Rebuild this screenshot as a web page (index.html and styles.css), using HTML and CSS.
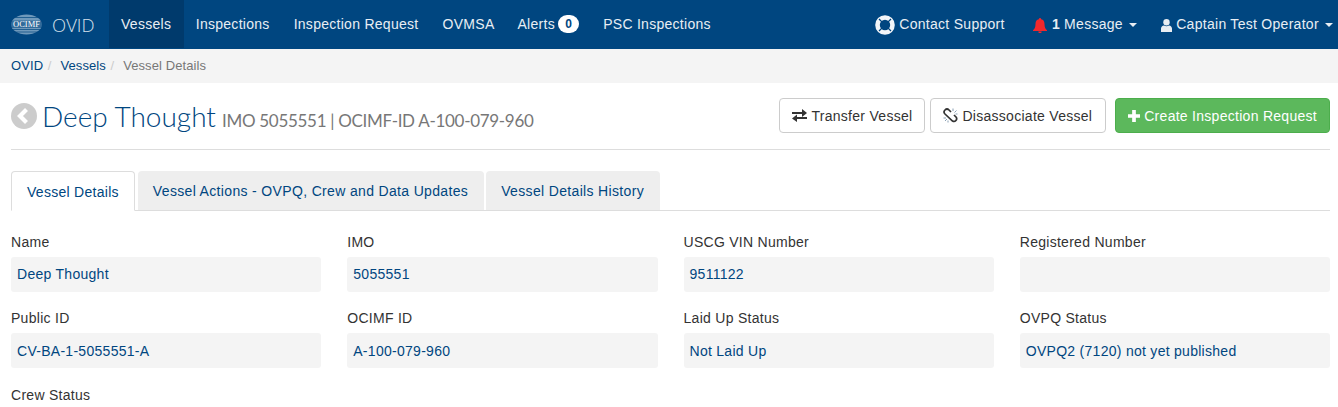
FILE: index.html
```html
<!DOCTYPE html>
<html lang="en">
<head>
<meta charset="utf-8">
<title>Vessel Details</title>
<link rel="stylesheet" href="styles.css">
</head>
<body>
<nav class="navbar">
  <a class="brand">
    <svg class="logo" width="31" height="21" viewBox="0 0 31 21">
      <ellipse cx="15.500" cy="10.500" rx="15.500" ry="10" fill="#6f99bb"/>
      <path d="M3 3.500h25M1 15.500h29M3 18h25" stroke="#004680" stroke-width=".7"/>
      <rect x="0" y="6.500" width="31" height="7.500" fill="#004680" opacity=".55"/>
      <text x="15.500" y="13.400" class="logo-text" text-anchor="middle">OCIMF</text>
    </svg>
    <span class="brand-name">OVID</span>
  </a>
  <ul class="nav-list">
    <li class="nav-item active">Vessels</li>
    <li class="nav-item">Inspections</li>
    <li class="nav-item">Inspection Request</li>
    <li class="nav-item">OVMSA</li>
    <li class="nav-item alerts">Alerts <span class="badge">0</span></li>
    <li class="nav-item">PSC Inspections</li>
  </ul>
  <ul class="nav-list nav-right">
    <li class="nav-item support">
      <svg class="icon" width="20" height="20" viewBox="0 0 20 20"><circle cx="10" cy="10" r="7.500" fill="none" stroke="#f2f5f8" stroke-width="4.600"/><path d="M4 4l3.500 3.500M16 4l-3.500 3.500M4 16l3.500-3.500M16 16l-3.500-3.500" stroke="#004680" stroke-width="1.300"/></svg>
      Contact Support
    </li>
    <li class="nav-item message">
      <svg class="icon" width="14" height="15" viewBox="0 0 14 15"><path d="M7 0a1.200 1.200 0 0 1 1.100 1.300C10.500 1.800 11.500 3.500 11.500 6c0 3.500 1 4.800 2.500 6.300V13H0v-.7C1.500 10.800 2.500 9.500 2.500 6c0-2.500 1-4.200 3.400-4.700A1.200 1.200 0 0 1 7 0zM5.300 13.600h3.400A1.700 1.700 0 0 1 5.300 13.600z" fill="#f2282c"/></svg>
      <b class="count">1</b> Message <span class="caret"></span>
    </li>
    <li class="nav-item user">
      <svg class="icon" width="11" height="13" viewBox="0 0 11 13"><circle cx="5.500" cy="3.300" r="3.200" fill="#e8edf2"/><path d="M0 13V9.600C0 7.800 1.300 6.800 3 6.500c1.500 1 3.500 1 5 0 1.700.3 3 1.300 3 3.100V13z" fill="#e8edf2"/></svg>
      Captain Test Operator <span class="caret"></span>
    </li>
  </ul>
</nav>
<ol class="breadcrumb">
  <li><a>OVID</a></li>
  <li class="sep">/</li>
  <li><a>Vessels</a></li>
  <li class="sep">/</li>
  <li class="current">Vessel Details</li>
</ol>
<main class="content">
  <header class="page-header">
    <h1 class="title">
      <svg class="back" width="26" height="26" viewBox="0 0 26 26"><circle cx="13" cy="13" r="13" fill="#ccc"/><path d="M15.500 6.500L9 13l6.500 6.500" fill="none" stroke="#fff" stroke-width="4.200"/></svg>
      <span class="title-name">Deep Thought</span>
      <small class="title-sub">IMO 5055551 | OCIMF-ID A-100-079-960</small>
    </h1>
    <div class="actions">
      <button class="btn">
        <svg width="15" height="13" viewBox="0 0 15 13"><path d="M0 3h10V0l5 4-5 4V5H0zM15 8H5V5.500L0 9.500l5 3.500v-3h10z" fill="#333"/></svg>
        Transfer Vessel
      </button>
      <button class="btn btn-unlink">
        <svg width="15" height="15" viewBox="0 0 15 15"><path d="M8 4L6 2A2.700 2.700 0 0 0 2 6l7.500 7A2.700 2.700 0 0 0 13 9l-2-2" fill="none" stroke="#333" stroke-width="1.700"/><path d="M10 .5V3M13.500 2.500L11.500 4.500M14.500 6H12.500M.5 10H3M2 13l2-2M5 14.500V12.500" stroke="#8aa0b4" stroke-width="1"/></svg>
        Disassociate Vessel
      </button>
      <button class="btn btn-success">
        <svg width="12" height="12" viewBox="0 0 13 13"><path d="M4.500 0h4v4.500H13v4H8.500V13h-4V8.500H0v-4h4.500z" fill="#fff"/></svg>
        Create Inspection Request
      </button>
    </div>
  </header>
  <ul class="tabs">
    <li class="tab active">Vessel Details</li>
    <li class="tab">Vessel Actions - OVPQ, Crew and Data Updates</li>
    <li class="tab">Vessel Details History</li>
  </ul>
  <section class="fields">
    <div class="field"><label>Name</label><div class="value">Deep Thought</div></div>
    <div class="field"><label>IMO</label><div class="value">5055551</div></div>
    <div class="field"><label>USCG VIN Number</label><div class="value">9511122</div></div>
    <div class="field"><label>Registered Number</label><div class="value"></div></div>
    <div class="field"><label>Public ID</label><div class="value">CV-BA-1-5055551-A</div></div>
    <div class="field"><label>OCIMF ID</label><div class="value">A-100-079-960</div></div>
    <div class="field"><label>Laid Up Status</label><div class="value">Not Laid Up</div></div>
    <div class="field"><label>OVPQ Status</label><div class="value">OVPQ2 (7120) not yet published</div></div>
    <div class="field"><label>Crew Status</label></div>
  </section>
</main>
</body>
</html>
```
FILE: styles.css
```css
* { box-sizing: border-box; }
html, body { margin: 0; padding: 0; height: 407px; overflow: hidden; }
body { font: 14px/20px "Liberation Sans", Arial, sans-serif; letter-spacing: .28px; color: #333; background: #fff; }
ul, ol { list-style: none; margin: 0; padding: 0; }

.navbar { display: flex; height: 49px; background: #004680; color: #e8eef4; }
.brand { display: flex; align-items: center; width: 109px; padding-left: 11px; }
.logo { margin-right: 10px; }
.logo-text { font: 8.500px "Liberation Serif", serif; letter-spacing: 0; fill: #fff; }
.brand-name { font: 300 18.500px "Open Sans", sans-serif; letter-spacing: 0; color: #d5e0ea; }
.nav-list { display: flex; }
.nav-right { margin-left: auto; }
.nav-item { height: 48px; padding: 0 12px; line-height: 48px; }
.nav-item.active { padding-right: 12.500px; background: #003a6c; }
.alerts { margin-left: -1px; }
.badge { display: inline-block; min-width: 21px; height: 18px; margin-left: -1px; padding: 0 6px; border-radius: 10px; background: #fff; color: #004680; font-size: 12px; font-weight: 700; line-height: 18px; letter-spacing: 0; text-align: center; vertical-align: 1px; }
.icon { vertical-align: middle; }
.support { padding: 0 13px 0 0; }
.message { padding: 0 12px 0 15px; }
.user { padding: 0 5px 0 12px; }
.count { font-weight: 700; margin-left: 1px; }
.caret { display: inline-block; width: 0; height: 0; margin-left: 2px; border-top: 4px solid; border-left: 4px solid transparent; border-right: 4px solid transparent; vertical-align: middle; }

.breadcrumb { display: flex; height: 34px; align-items: center; padding: 0 11px; background: #f4f4f4; font-size: 13px; letter-spacing: .1px; }
.breadcrumb a { color: #004680; }
.sep { padding: 0 9px 0 4.500px; color: #ccc; }
.current { color: #777; }

.content { padding: 0 8px 0 11px; }
.page-header { display: flex; justify-content: space-between; align-items: flex-start; height: 67px; padding-top: 15px; border-bottom: 1px solid #ddd; }
.title { display: flex; align-items: baseline; margin: -1px 0 0; font-weight: 400; font-family: Lato, sans-serif; letter-spacing: 0; }
.back { align-self: center; margin-right: 5px; }
.title-name { font-size: 28px; font-weight: 300; line-height: 38px; color: #004680; }
.title-sub { margin-left: 6px; font-size: 17px; letter-spacing: -.3px; color: #777; }
.actions { display: flex; gap: 5px; }
.btn { display: flex; align-items: center; gap: 4px; height: 35px; padding: 0 12px; border: 1px solid #ccc; border-radius: 4px; background: #fff; color: #333; font: inherit; letter-spacing: inherit; }
.btn-unlink { padding-right: 13px; }
.btn-success { margin-left: 4px; background: #5cb85c; border-color: #4cae4c; color: #fff; }

.tabs { display: flex; gap: 2px; margin-top: 21px; height: 40px; border-bottom: 1px solid #ddd; }
.tab { height: 39px; padding: 10px 16px 10px 15px; background: #eee; color: #004680; letter-spacing: .34px; border-radius: 4px 4px 0 0; }
.tab.active { height: 40px; padding-right: 15px; background: #fff; border: 1px solid #ddd; border-bottom-color: #fff; color: #004680; letter-spacing: .28px; margin-right: 1px; }

.fields { display: grid; grid-template-columns: repeat(4, 1fr); column-gap: 26px; row-gap: 16.300px; margin-top: 21px; }
.field label { display: block; margin-bottom: 5px; line-height: 20px; color: #333; }
.field label:last-child { margin-bottom: 0; }
.value { height: 35px; padding: 7.300px 6px 0; border-radius: 3px; background: #f4f4f4; color: #004680; }
```
